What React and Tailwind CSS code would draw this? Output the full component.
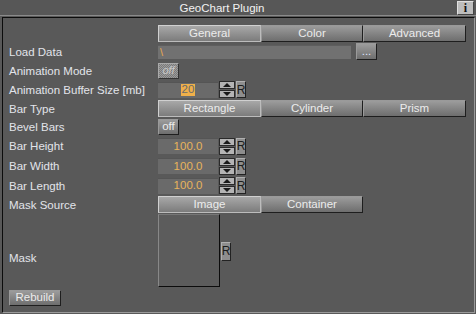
import React from "react";

const font = { fontFamily: '"Liberation Sans", Arial, sans-serif' };

function Btn({ children, sel, className = "" }) {
  return (
    <div
      className={
        (sel
          ? "border border-t-[#d0d0d0] border-l-[#d0d0d0] border-r-[#bcbcbc] border-b-[#bcbcbc] bg-gradient-to-b from-[#a8a8a8] to-[#7c7c7c] "
          : "border border-t-[#9a9a9a] border-l-[#9a9a9a] border-r-[#1e1e1e] border-b-[#1e1e1e] bg-gradient-to-b from-[#9c9c9c] to-[#6e6e6e] ") +
        "flex items-center justify-center text-[#ececec] text-[11.5px] leading-none " +
        className
      }
    >
      {children}
    </div>
  );
}

function Spinner() {
  return (
    <div className="flex flex-col w-[16px] h-[17px] ml-[1px] gap-[1px]">
      <div className="flex-1 bg-[#b4b4b4] border border-[#2a2a2a] flex items-center justify-center">
        <svg width="8" height="4" viewBox="0 0 8 4">
          <polygon points="0,4 8,4 4,0" fill="#1a1a1a" />
        </svg>
      </div>
      <div className="flex-1 bg-[#b4b4b4] border border-[#2a2a2a] flex items-center justify-center">
        <svg width="8" height="4" viewBox="0 0 8 4">
          <polygon points="0,0 8,0 4,4" fill="#1a1a1a" />
        </svg>
      </div>
    </div>
  );
}

function RBtn({ className = "" }) {
  return (
    <div
      className={
        "w-[10px] h-[17px] ml-[1px] bg-[#8e8e8e] border border-t-[#b0b0b0] border-l-[#b0b0b0] border-r-[#222] border-b-[#222] flex items-center justify-center text-[12px] leading-none text-[#1c1c1c] " +
        className
      }
    >
      R
    </div>
  );
}

function NumField({ value, selected }) {
  return (
    <div className="flex items-center">
      <div className="w-[60px] h-[16px] bg-[#6a6a6a] border-t border-[#555] flex items-center justify-center text-[11.5px] leading-none text-[#e8b45c]">
        {selected ? (
          <span className="bg-[#f0b04a] text-[#6a6a6a] px-[1px]">{value}</span>
        ) : (
          value
        )}
      </div>
      <Spinner />
      <RBtn />
    </div>
  );
}

function Row({ label, h, children }) {
  return (
    <div className="flex items-center" style={{ height: h }}>
      <div className="w-[155px] pl-[6px] pt-[2px] text-[11.5px] leading-none text-[#e2e4ea] whitespace-nowrap">
        {label}
      </div>
      <div className="flex items-center">{children}</div>
    </div>
  );
}

export default function App() {
  return (
    <div className="w-[476px] h-[314px] bg-[#595959] flex flex-col overflow-hidden" style={font}>
      {/* title bar */}
      <div className="h-[15px] relative flex items-center justify-center pr-[32px] bg-[#575757]">
        <span className="text-[11.5px] leading-none text-[#f2f2f2] mt-[2px]">GeoChart Plugin</span>
        <div className="absolute right-[2px] top-[1px] w-[17px] h-[14px] bg-[#bdbdbd] border border-t-[#e0e0e0] border-l-[#e0e0e0] border-r-[#444] border-b-[#444] flex items-center justify-center">
          <span
            className="text-[12px] font-bold leading-none text-[#111]"
            style={{ fontFamily: '"Liberation Serif", serif' }}
          >
            i
          </span>
        </div>
      </div>
      <div className="h-[1px] bg-[#8a8a8a]" />
      <div className="h-[1px]" />
      {/* panel */}
      <div className="flex-1 ml-[2px] mr-[1px] mb-[1px] border-t border-l border-t-[#0c0c0c] border-l-[#0c0c0c] border-r border-b border-r-[#9a9a9a] border-b-[#9a9a9a] flex flex-col">
        <div className="h-[7px]" />
        {/* tabs */}
        <div className="flex h-[17px] pl-[155px]">
          <Btn sel className="w-[103px]">General</Btn>
          <Btn className="w-[102px]">Color</Btn>
          <Btn className="w-[103px]">Advanced</Btn>
        </div>
        <Row label="Load Data" h={19}>
          <div className="w-[193px] h-[14px] mt-[1px] bg-[#717171] border-t border-[#5e5e5e] flex items-center pl-[2px] text-[11px] leading-none text-[#e8a850]">
            \
          </div>
          <Btn className="w-[21px] h-[17px] ml-[5px] text-[10px]">
            <span className="text-[#dfe4ff] tracking-[0px]">...</span>
          </Btn>
        </Row>
        <Row label="Animation Mode" h={19}>
          <div className="w-[21px] h-[16px] border border-t-[#aaa] border-l-[#aaa] border-r-[#333] border-b-[#333] flex items-center justify-center text-[11px] leading-none text-[#c8c8c8] italic [background-image:repeating-conic-gradient(#9c9c9c_0_25%,#7a7a7a_0_50%)] [background-size:2px_2px]">
            off
          </div>
        </Row>
        <Row label="Animation Buffer Size [mb]" h={19}>
          <NumField value="20" selected />
        </Row>
        <Row label="Bar Type" h={19}>
          <div className="flex h-[17px]">
            <Btn sel className="w-[103px]">Rectangle</Btn>
            <Btn className="w-[102px]">Cylinder</Btn>
            <Btn className="w-[103px]">Prism</Btn>
          </div>
        </Row>
        <Row label="Bevel Bars" h={18}>
          <Btn className="w-[21px] h-[16px]">off</Btn>
        </Row>
        <Row label="Bar Height" h={20}>
          <NumField value="100.0" />
        </Row>
        <Row label="Bar Width" h={20}>
          <NumField value="100.0" />
        </Row>
        <Row label="Bar Length" h={19}>
          <NumField value="100.0" />
        </Row>
        <Row label="Mask Source" h={19}>
          <div className="flex h-[17px]">
            <Btn sel className="w-[103px]">Image</Btn>
            <Btn className="w-[102px]">Container</Btn>
          </div>
        </Row>
        <div className="flex h-[74px]">
          <div className="w-[155px] pl-[6px] pt-[39px] text-[11.5px] leading-none text-[#e2e4ea]">Mask</div>
          <div className="w-[62px] h-[73px] bg-[#5c5c5c] border border-t-[#777] border-l-[#888] border-r-[#0c0c0c] border-b-[#0c0c0c]" />
          <div className="flex items-center">
            <RBtn className="ml-[0px] h-[19px]" />
          </div>
        </div>
        <div className="h-[2px]" />
        <div className="pl-[6px]">
          <Btn className="w-[52px] h-[16px]">Rebuild</Btn>
        </div>
      </div>
    </div>
  );
}
